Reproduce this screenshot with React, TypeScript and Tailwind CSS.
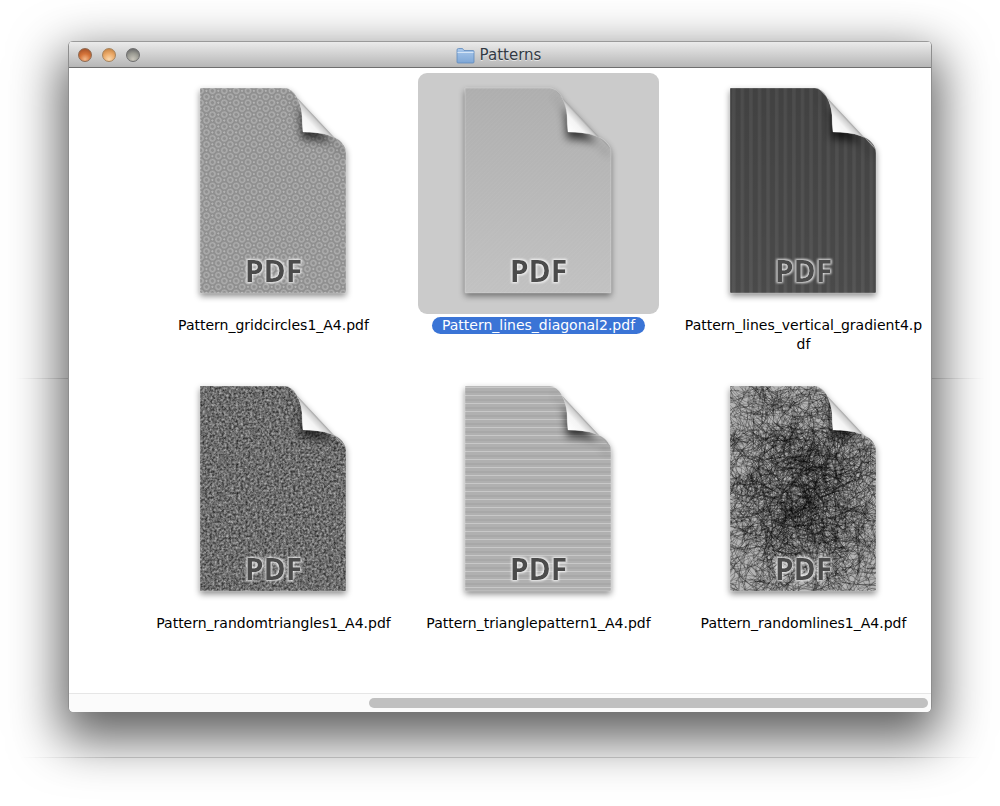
const docPath =
  "M47 15.5 Q47 15 48 15 L132 15 C141 16 148 28 149 42 Q149 52 150 59 C160 59 170 60 178 63 C187 66 193 72 193 80 L193 219 Q193 220 192 220 L48 220 Q47 220 47 219 Z";
const foldPath =
  "M132 15 C141 16 148 28 149 42 Q149 52 150 59 C160 59 170 60 178 63 C185 66 190 71 193 77 L136 16 Z";

// small seeded random so the scribble is the same on every load
let seed = 1337;
const rnd = () => {
  seed = (seed * 16807) % 2147483647;
  return seed / 2147483647;
};
const gauss = () => (rnd() + rnd() + rnd()) / 3 - 0.5;

const scribble = Array.from({ length: 3200 }, (_, i) => {
  const spread = i % 2 === 0;
  const x = spread ? 30 + rnd() * 180 : 120 + gauss() * 230;
  const y = spread ? 5 + rnd() * 230 : 118 + gauss() * 290;
  const a = rnd() * Math.PI * 2;
  const l = 12 + rnd() * 34;
  const bend = (rnd() - 0.5) * 26;
  const mx = x + Math.cos(a) * l * 0.5 - Math.sin(a) * bend;
  const my = y + Math.sin(a) * l * 0.5 + Math.cos(a) * bend;
  return `M${x.toFixed(1)} ${y.toFixed(1)} Q${mx.toFixed(1)} ${my.toFixed(1)} ${(x + Math.cos(a) * l).toFixed(1)} ${(y + Math.sin(a) * l).toFixed(1)}`;
});

const Texture = ({ kind }: { kind: string }) => {
  if (kind === "gridcircles") {
    return (
      <>
        <defs>
          <pattern id="tex-gridcircles" width="8.4" height="8.4" patternUnits="userSpaceOnUse" patternTransform="rotate(45)">
            <rect width="8.4" height="8.4" fill="#8f8f8f" />
            <circle cx="4.2" cy="4.2" r="2.6" fill="none" stroke="#b0b0b0" strokeWidth="1.3" />
            <circle cx="0" cy="0" r="0.8" fill="#d8d8d8" />
            <circle cx="8.4" cy="8.4" r="0.8" fill="#d8d8d8" />
            <circle cx="0" cy="8.4" r="0.8" fill="#d8d8d8" />
            <circle cx="8.4" cy="0" r="0.8" fill="#d8d8d8" />
          </pattern>
        </defs>
        <rect x="40" y="10" width="160" height="215" fill="url(#tex-gridcircles)" />
      </>
    );
  }
  if (kind === "diagonal") {
    return (
      <>
        <defs>
          <linearGradient id="tex-diagonal-bg" x1="0" y1="0" x2="0" y2="1">
            <stop offset="0" stopColor="#aeaeae" />
            <stop offset="1" stopColor="#c2c2c2" />
          </linearGradient>
          <pattern id="tex-diagonal" width="3" height="3" patternUnits="userSpaceOnUse" patternTransform="rotate(-45)">
            <rect width="3" height="1" fill="#ffffff" opacity="0.03" />
          </pattern>
        </defs>
        <rect x="40" y="10" width="160" height="215" fill="url(#tex-diagonal-bg)" />
        <rect x="40" y="10" width="160" height="215" fill="url(#tex-diagonal)" />
      </>
    );
  }
  if (kind === "vertical") {
    return (
      <>
        <defs>
          <pattern id="tex-vertical" width="8.6" height="10" patternUnits="userSpaceOnUse" patternTransform="translate(47 0)">
            <rect width="8.6" height="10" fill="#4a4a4a" />
            <rect x="2" width="3.4" height="10" fill="#565656" />
          </pattern>
          <linearGradient id="tex-vertical-shade" x1="0" y1="0" x2="0" y2="1">
            <stop offset="0" stopColor="#000000" stopOpacity="0.12" />
            <stop offset="1" stopColor="#000000" stopOpacity="0" />
          </linearGradient>
        </defs>
        <rect x="40" y="10" width="160" height="215" fill="url(#tex-vertical)" />
        <rect x="40" y="10" width="160" height="215" fill="url(#tex-vertical-shade)" />
      </>
    );
  }
  if (kind === "triangles") {
    return (
      <>
        <defs>
          <filter id="tex-noise" x="0" y="0" width="100%" height="100%" colorInterpolationFilters="sRGB">
            <feTurbulence type="fractalNoise" baseFrequency="0.42" numOctaves="2" seed="4" />
            <feColorMatrix values="0.75 0 0 0 0.05  0.75 0 0 0 0.05  0.75 0 0 0 0.05  0 0 0 0 1" />
          </filter>
        </defs>
        <rect x="40" y="10" width="160" height="215" filter="url(#tex-noise)" />
      </>
    );
  }
  if (kind === "trianglepattern") {
    return (
      <>
        <defs>
          <pattern id="tex-rows" width="8" height="8" patternUnits="userSpaceOnUse">
            <rect width="8" height="8" fill="#b0b0b0" />
            <rect y="0" width="8" height="1" fill="#c8c8c8" />
            <rect y="4" width="8" height="2" fill="#a8a8a8" />
          </pattern>
        </defs>
        <rect x="40" y="10" width="160" height="215" fill="url(#tex-rows)" />
      </>
    );
  }
  return (
    <>
      <rect x="40" y="10" width="160" height="215" fill="#b4b4b4" />
      <g fill="none" stroke="#000000" strokeWidth="0.6" strokeOpacity="0.4">
        {scribble.map((d, i) => (
          <path key={i} d={d} />
        ))}
      </g>
    </>
  );
};

const PdfDoc = ({ kind }: { kind: string }) => (
  <svg viewBox="0 0 241 241" className="block w-[241px] h-[241px] [filter:drop-shadow(0_3px_3px_rgba(0,0,0,0.45))]">
    <defs>
      <clipPath id={`clip-${kind}`}>
        <path d={docPath} />
      </clipPath>
      <linearGradient id={`fold-${kind}`} gradientUnits="userSpaceOnUse" x1="150" y1="59" x2="164" y2="46">
        <stop offset="0" stopColor="#ffffff" />
        <stop offset="0.6" stopColor="#f4f4f4" />
        <stop offset="0.9" stopColor="#cfcfcf" />
        <stop offset="1" stopColor="#a4a4a4" />
      </linearGradient>
      <filter id={`blur-${kind}`} x="-30%" y="-30%" width="160%" height="160%">
        <feGaussianBlur stdDeviation="4" />
      </filter>
      <filter id={`glow-${kind}`} x="-20%" y="-30%" width="140%" height="160%">
        <feFlood floodColor="#ffffff" floodOpacity="0.85" result="c" />
        <feMorphology in="SourceAlpha" operator="dilate" radius="1" result="d" />
        <feGaussianBlur in="d" stdDeviation="0.9" result="b" />
        <feComposite in="c" in2="b" operator="in" result="g" />
        <feMerge>
          <feMergeNode in="g" />
          <feMergeNode in="SourceGraphic" />
        </feMerge>
      </filter>
    </defs>
    <g clipPath={`url(#clip-${kind})`}>
      <Texture kind={kind} />
      <path d={foldPath} fill="#000000" opacity="0.7" transform="translate(-1 7)" filter={`url(#blur-${kind})`} />
    </g>
    <path d={docPath} fill="none" stroke="#ffffff" strokeOpacity="0.25" strokeWidth="1" />
    <path d={foldPath} fill={`url(#fold-${kind})`} />
    <text
      x="120.5"
      y="209"
      textAnchor="middle"
      filter={`url(#glow-${kind})`}
      className="fill-[#4c4c4c] font-['Open_Sans',sans-serif] font-bold text-[30px]"
    >
      PDF
    </text>
  </svg>
);

const files = [
  { kind: "gridcircles", name: "Pattern_gridcircles1_A4.pdf" },
  { kind: "diagonal", name: "Pattern_lines_diagonal2.pdf", selected: true },
  { kind: "vertical", name: "Pattern_lines_vertical_gradient4.pdf" },
  { kind: "triangles", name: "Pattern_randomtriangles1_A4.pdf" },
  { kind: "trianglepattern", name: "Pattern_trianglepattern1_A4.pdf" },
  { kind: "lines", name: "Pattern_randomlines1_A4.pdf" },
];

export default function App() {
  return (
    <div className="relative w-[1000px] h-[806px] overflow-hidden bg-white pt-[41px] pl-[68px] font-['DejaVu_Sans',sans-serif]">
      {/* stray lines left in the shadow of the capture */}
      <div className="absolute left-[15px] right-[15px] top-[378px] h-px bg-[linear-gradient(to_right,rgba(0,0,0,0),rgba(0,0,0,0.16)_6%,rgba(0,0,0,0.16)_94%,rgba(0,0,0,0))]" />
      <div className="absolute left-[20px] right-[20px] top-[757px] h-px bg-[linear-gradient(to_right,rgba(0,0,0,0),rgba(0,0,0,0.16)_10%,rgba(0,0,0,0.16)_90%,rgba(0,0,0,0))]" />

      <div className="relative w-[864px] h-[671px] flex flex-col rounded-[5px] overflow-hidden bg-white border-x border-[#8e8e8e] shadow-[0_20px_50px_8px_rgba(0,0,0,0.62)]">
        {/* title bar */}
        <div className="h-[27px] shrink-0 pt-[1px] grid grid-cols-[1fr_auto_1fr] items-center border-b border-[#6e6e6e] border-t-[#9a9a9a] border-t bg-[linear-gradient(to_bottom,#ebebeb,#b6b6b6)]">
          <div className="flex items-center gap-[10px] pl-[9px]">
            <span className="w-[14px] h-[14px] rounded-full border border-[#8d6a52] bg-[radial-gradient(circle_at_50%_85%,#f3b98a_0%,#d5743a_45%,#a9552a_85%)]" />
            <span className="w-[14px] h-[14px] rounded-full border border-[#a5845f] bg-[radial-gradient(circle_at_50%_85%,#fbd9ad_0%,#eba968_50%,#c98748_85%)]" />
            <span className="w-[14px] h-[14px] rounded-full border border-[#6f6f6f] bg-[radial-gradient(circle_at_50%_85%,#c9c6bc_0%,#9a9a92_50%,#6d6d6d_85%)]" />
          </div>
          <div className="flex items-center gap-[5px] pr-[3px]">
            <svg viewBox="0 0 19 17" className="w-[19px] h-[17px]">
              <defs>
                <linearGradient id="folder-blue" x1="0" y1="0" x2="0" y2="1">
                  <stop offset="0" stopColor="#a9c8ec" />
                  <stop offset="1" stopColor="#7fa7d6" />
                </linearGradient>
              </defs>
              <path d="M1 3 Q1 1.5 2.5 1.5 L6.5 1.5 L8 3.5 L17 3.5 Q18 3.5 18 4.5 L18 15 Q18 16 17 16 L2 16 Q1 16 1 15 Z" fill="url(#folder-blue)" stroke="#5f8abc" strokeWidth="0.8" />
              <rect x="1.5" y="5" width="16" height="1" fill="#d4e4f6" />
            </svg>
            <span className="text-[15px] leading-none text-[#333a44] [text-shadow:0_1px_0_rgba(255,255,255,0.6)]">Patterns</span>
          </div>
          <div />
        </div>

        {/* icon view */}
        <div className="flex-1 min-h-0 overflow-hidden pt-[5px] pl-[84px]">
          <div className="grid grid-cols-[241px_241px_241px] auto-rows-[298px] gap-x-[24px]">
            {files.map((f) => (
              <div key={f.kind} className="flex flex-col items-center">
                <div className={f.selected ? "rounded-[9px] bg-[#cbcbcb]" : ""}>
                  <PdfDoc kind={f.kind} />
                </div>
                <div className="mt-[2px] w-[241px] text-center text-[14px] leading-[19px] text-black break-all">
                  {f.selected ? (
                    <span className="inline-block rounded-full bg-[#3a74d6] px-[10px] font-medium leading-[17px] text-white">{f.name}</span>
                  ) : (
                    f.name
                  )}
                </div>
              </div>
            ))}
          </div>
        </div>

        {/* scrollbar */}
        <div className="h-[19px] shrink-0 flex items-center pl-[300px] pr-[3px] pb-[1px] border-t border-[#e6e6e6] bg-[#fbfbfb]">
          <div className="flex-1 h-[10px] rounded-full bg-[#c0c0c0]" />
        </div>
      </div>
    </div>
  );
}
